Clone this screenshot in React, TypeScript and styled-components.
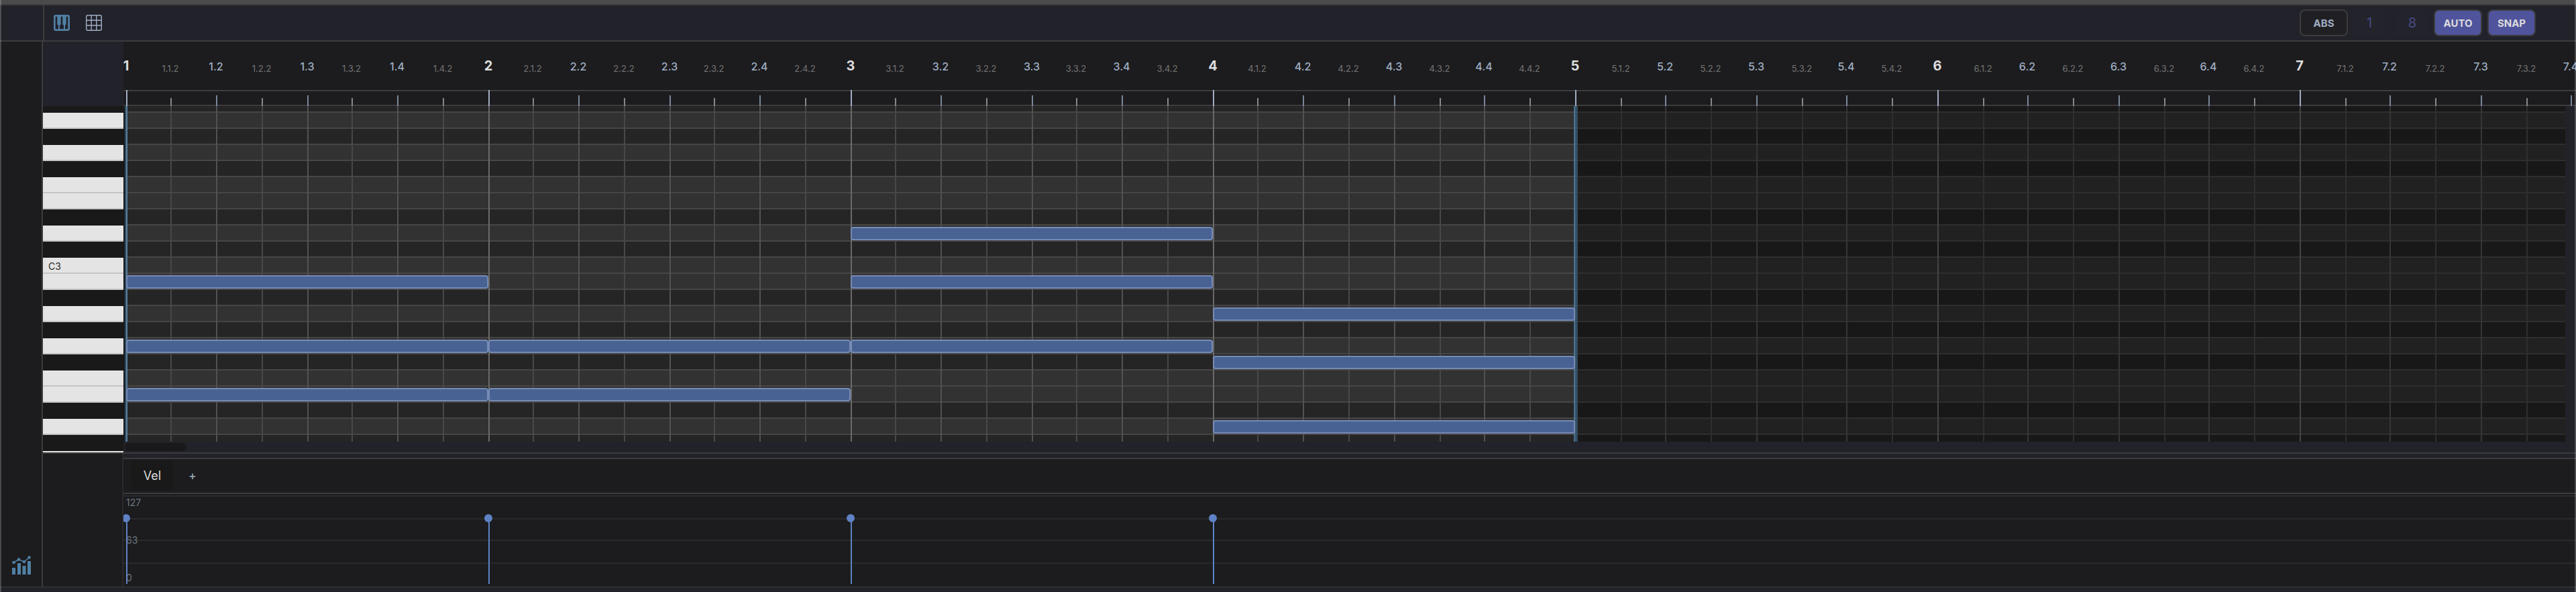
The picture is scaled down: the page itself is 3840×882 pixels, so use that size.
import React from 'react';
import styled, { createGlobalStyle, css } from 'styled-components';
import { MdPiano } from 'react-icons/md';

const BAR_WIDTH = 540.1;
const STEPS_PER_BAR = 8;
const STEP_COUNT = 55;
const LOOP_BARS = 4;
const KEY_HEIGHT = 24;

const color = {
  panel: '#22222b',
  dark: '#1c1c1e',
  line: '#3c3c3d',
  faint: '#2a2a2c',
  blue: '#5080a4',
  note: '#486293',
  noteEdge: '#768bb5',
  accent: '#50549c',
  steel: '#a0aec4',
  text: '#dcdcdc',
};

/* Grid lines land on even pixels so that they stay crisp. */
const stepX = (step: number) =>
  2 * Math.floor(((step * BAR_WIDTH) / STEPS_PER_BAR + 0.15) / 2);

type Level = 'bar' | 'beat' | 'sub';

const steps = Array.from({ length: STEP_COUNT }, (_, i) => {
  const bar = Math.floor(i / STEPS_PER_BAR) + 1;
  const beat = Math.floor((i % STEPS_PER_BAR) / 2) + 1;
  const level: Level = i % STEPS_PER_BAR === 0 ? 'bar' : i % 2 === 0 ? 'beat' : 'sub';
  const label = level === 'bar' ? `${bar}` : level === 'beat' ? `${bar}.${beat}` : `${bar}.${beat}.2`;
  return { label, level, width: stepX(i + 1) - stepX(i) };
});

const pitches = [
  'A#3', 'A3', 'G#3', 'G3', 'F#3', 'F3', 'E3', 'D#3', 'D3', 'C#3', 'C3', 'B2',
  'A#2', 'A2', 'G#2', 'G2', 'F#2', 'F2', 'E2', 'D#2', 'D2', 'C#2', 'C2',
];

const notes = [
  { pitch: 'B2', bar: 0 },
  { pitch: 'G2', bar: 0 },
  { pitch: 'E2', bar: 0 },
  { pitch: 'G2', bar: 1 },
  { pitch: 'E2', bar: 1 },
  { pitch: 'D3', bar: 2 },
  { pitch: 'B2', bar: 2 },
  { pitch: 'G2', bar: 2 },
  { pitch: 'A2', bar: 3 },
  { pitch: 'F#2', bar: 3 },
  { pitch: 'D2', bar: 3 },
];

const GlobalStyle = createGlobalStyle`
  * { box-sizing: border-box; }
  body {
    margin: 0;
    background: ${color.panel};
    color: ${color.text};
    font-family: Inter, "Liberation Sans", sans-serif;
  }
  button, input { font-family: inherit; margin: 0; padding: 0; }
`;

const Editor = styled.div`
  position: relative;
  display: flex;
  flex-direction: column;
  height: 100vh;
  min-height: 560px;
  overflow: hidden;
  &::after {
    content: '';
    position: absolute;
    inset: 0;
    border: solid rgba(255, 255, 255, 0.2);
    border-width: 0 2px;
    pointer-events: none;
  }
`;

const ResizeBar = styled.div`
  flex: none;
  height: 8px;
  background: #4b4b4b;
  border-bottom: 2px solid #3f3f3f;
`;

const Header = styled.header`
  flex: none;
  display: flex;
  height: 54px;
  background: ${color.panel};
  border-bottom: 2px solid ${color.line};
`;

const HeaderCorner = styled.div`
  width: 66px;
  border-right: 2px solid ${color.line};
`;

const Toolbar = styled.div`
  flex: 1;
  display: flex;
  align-items: center;
  padding: 0 60px 0 14px;
`;

const ViewSwitch = styled.div`
  display: flex;
  flex: 1;
  gap: 24px;
`;

const IconButton = styled.button<{ $active?: boolean }>`
  display: flex;
  align-items: center;
  justify-content: center;
  width: 24px;
  height: 24px;
  border: 0;
  background: none;
  color: ${(p) => (p.$active ? color.blue : color.steel)};
  svg { flex: none; display: block; }
`;

const ToggleButton = styled.button<{ $on?: boolean }>`
  width: 72px;
  height: 40px;
  border: 2px solid ${color.line};
  border-radius: 8px;
  background: ${(p) => (p.$on ? color.accent : '#202024')};
  color: ${(p) => (p.$on ? color.text : color.steel)};
  font-size: 15px;
  font-weight: 700;
`;

const ToggleRow = styled.div`
  display: flex;
  gap: 8px;
`;

const Fraction = styled.div`
  display: flex;
  gap: 16px;
`;

const NumberField = styled.input`
  width: 48px;
  height: 40px;
  border: 0;
  border-radius: 4px;
  background: #23232c;
  color: #484b85;
  font-size: 20px;
  text-align: center;
`;

const Body = styled.div`
  flex: 1;
  display: flex;
  min-height: 0;
`;

const Sidebar = styled.aside`
  flex: none;
  display: flex;
  flex-direction: column;
  justify-content: flex-end;
  align-items: center;
  width: 64px;
  padding: 0 0 18px 2px;
  background: ${color.dark};
  border-right: 2px solid ${color.line};
`;

const LaneButton = styled(IconButton)`
  width: 28px;
  height: 28px;
`;

const Main = styled.main`
  flex: 1;
  display: flex;
  flex-direction: column;
  min-width: 0;
`;

const Roll = styled.section`
  flex: 1;
  display: flex;
  min-height: 0;
  border-bottom: 2px solid ${color.line};
`;

const KeyColumn = styled.div`
  flex: none;
  display: flex;
  flex-direction: column;
  width: 120px;
`;

const KeyCorner = styled.div`
  flex: none;
  height: 96px;
  background: ${color.panel};
`;

/* The pitch range is scrolled so that its top key is partly hidden. */
const PitchScroller = styled.div`
  flex: 1;
  min-height: 0;
  overflow: hidden;
  & > :first-child { margin-top: -14px; }
`;

const Key = styled.div<{ $black: boolean }>`
  height: ${KEY_HEIGHT}px;
  padding-left: 8px;
  font-size: 14px;
  line-height: 26px;
  color: #2a2a2a;
  ${(p) =>
    p.$black
      ? css`background: #191919;`
      : css`
          background: #e4e4e4;
          border-bottom: 2px solid #c4c4c4;
        `}
`;

const Timeline = styled.div`
  flex: 1;
  display: flex;
  flex-direction: column;
  min-width: 0;
`;

const Ruler = styled.div`
  flex: none;
  display: flex;
  height: 96px;
  padding-left: 4px;
  overflow: hidden;
  background:
    linear-gradient(${color.line}, ${color.line}) 0 72px / 100% 2px no-repeat,
    linear-gradient(${color.line}, ${color.line}) 0 94px / 100% 2px no-repeat,
    ${color.dark};
`;

const RulerStep = styled.div`
  flex: none;
  display: flex;
  flex-direction: column;
  justify-content: space-between;
`;

const labelStyle = {
  bar: css`font-size: 20px; line-height: 72px; font-weight: 700; color: ${color.text};`,
  beat: css`font-size: 16px; line-height: 74px; font-weight: 500; color: ${color.steel};`,
  sub: css`font-size: 13px; line-height: 80px; color: #757575;`,
};

const RulerLabel = styled.span<{ $level: Level }>`
  display: flex;
  justify-content: center;
  width: 0;
  height: 48px;
  white-space: nowrap;
  ${(p) => labelStyle[p.$level]}
`;

const tickHeight = { bar: 24, beat: 16, sub: 12 };
const tickColor = { bar: color.steel, beat: '#78879a', sub: '#888888' };

const Tick = styled.i<{ $level: Level }>`
  width: 2px;
  height: ${(p) => tickHeight[p.$level]}px;
  background: ${(p) => tickColor[p.$level]};
`;

const RollBody = styled.div`
  flex: 1;
  display: flex;
  min-height: 0;
`;

const Grid = styled.div`
  position: relative;
  flex: 1;
  min-width: 0;
  padding-left: 4px;
  overflow: hidden;
  background: #252528;
`;

const PitchRows = styled(PitchScroller)`
  height: 100%;
`;

const PitchRow = styled.div<{ $black: boolean }>`
  height: ${KEY_HEIGHT}px;
  background: ${(p) => (p.$black ? '#252525' : '#323232')};
  border-bottom: 2px solid #464646;
`;

const Columns = styled.div`
  position: absolute;
  inset: 0 0 0 4px;
  display: flex;
  overflow: hidden;
`;

const lineColor = { bar: '#6a6a6a', beat: '#525252', sub: '#484848' };

const Column = styled.div<{ $level: Level }>`
  flex: none;
  border-left: 2px solid ${(p) => lineColor[p.$level]};
`;

const LoopRange = styled.div`
  position: absolute;
  top: 0;
  bottom: 0;
  left: 2px;
  border: solid rgba(84, 136, 176, 0.75);
  border-width: 0 6px 0 4px;
`;

/* Shades what lies before and after the looped bars. */
const OutOfLoop = styled.div`
  position: absolute;
  top: 0;
  bottom: 0;
  background: rgba(0, 0, 0, 0.34);
`;

const Note = styled.div`
  position: absolute;
  height: 20px;
  background: ${color.note};
  border: 2px solid ${color.noteEdge};
  border-radius: 4px;
`;

const VerticalTrack = styled.div`
  flex: none;
  width: 16px;
  background: ${color.panel};
`;

const HorizontalTrack = styled.div`
  flex: none;
  height: 16px;
  padding: 2px;
  background: ${color.panel};
`;

const Thumb = styled.div`
  width: 92px;
  height: 12px;
  border-radius: 6px;
  background: #191919;
`;

const Lanes = styled.section`
  flex: none;
  display: flex;
  height: 198px;
`;

const LaneGutter = styled.div`
  flex: none;
  width: 120px;
  background: ${color.dark};
  border-right: 2px solid ${color.faint};
`;

const LanePanel = styled.div`
  flex: 1;
  display: flex;
  flex-direction: column;
  min-width: 0;
  padding-top: 6px;
`;

const LaneTabs = styled.div`
  flex: none;
  display: flex;
  align-items: center;
  height: 54px;
  padding: 0 12px 2px;
  background: ${color.dark};
  border: solid ${color.line};
  border-width: 2px 0;
`;

const LaneTab = styled.button`
  width: 62px;
  height: 44px;
  border: 0;
  border-radius: 6px;
  background: #191919;
  color: ${color.text};
  font-size: 18px;
`;

const AddLane = styled(LaneTab)`
  width: 58px;
  background: none;
  color: ${color.steel};
`;

const VelocityLane = styled.div`
  position: relative;
  flex: 1;
  overflow: hidden;
  background:
    linear-gradient(${color.faint}, ${color.faint}) 0 2px / 100% 2px no-repeat,
    linear-gradient(${color.faint}, ${color.faint}) 0 36px / 100% 2px no-repeat,
    linear-gradient(${color.faint}, ${color.faint}) 0 68px / 100% 2px no-repeat,
    linear-gradient(${color.faint}, ${color.faint}) 0 102px / 100% 2px no-repeat,
    ${color.dark};
`;

const Scale = styled.div`
  display: flex;
  flex-direction: column;
  justify-content: space-between;
  height: 100%;
  padding: 5px 4px;
  color: #6b7480;
  font-size: 14px;
  line-height: 16px;
`;

const Stem = styled.div`
  position: absolute;
  top: 36px;
  bottom: 4px;
  width: 2px;
  background: #5f82c5;
  &::before {
    content: '';
    position: absolute;
    left: -6px;
    top: -6px;
    width: 12px;
    height: 12px;
    border-radius: 50%;
    background: inherit;
  }
`;

const Footer = styled.footer`
  flex: none;
  height: 8px;
  background: ${color.panel};
  border-top: 1px solid ${color.line};
`;

const GridIcon = () => (
  <svg width="24" height="24" viewBox="0 0 24 24" fill="none" stroke="currentColor" strokeWidth="1.4">
    <rect x="0.7" y="0.7" width="22.6" height="22.6" rx="2.2" />
    <path d="M8.2 1v22M15.8 1v22M1 8.2h22M1 15.8h22" />
  </svg>
);

const ChartIcon = () => (
  <svg width="28" height="28" viewBox="0 0 28 28" fill="currentColor">
    <path d="M0 18h5v10H0zM8 11h5v17H8zM15.500 15h5v13h-5zM23 8h5v20h-5z" />
    <circle cx="2.500" cy="10" r="2.300" />
    <circle cx="10" cy="5.500" r="2.300" />
    <circle cx="18" cy="9" r="2.300" />
    <circle cx="25.500" cy="2.500" r="2.300" />
    <path d="M2.500 10L10 5.500L18 9L25.500 2.500" fill="none" stroke="currentColor" strokeWidth="1.500" />
  </svg>
);

const isBlack = (pitch: string) => pitch.includes('#');
const barX = (bar: number) => stepX(bar * STEPS_PER_BAR);
const noteTop = (pitch: string) => pitches.indexOf(pitch) * KEY_HEIGHT - 12;

export default function App() {
  return (
    <>
      <GlobalStyle />
      <Editor>
        <ResizeBar />
        <Header>
          <HeaderCorner />
          <Toolbar>
            <ViewSwitch>
              <IconButton $active aria-label="Piano roll"><MdPiano size={32} /></IconButton>
              <IconButton aria-label="Step grid"><GridIcon /></IconButton>
            </ViewSwitch>
            <ToggleRow>
              <ToggleButton>ABS</ToggleButton>
              <Fraction>
                <NumberField aria-label="Grid numerator" defaultValue="1" />
                <NumberField aria-label="Grid denominator" defaultValue="8" />
              </Fraction>
              <ToggleButton $on>AUTO</ToggleButton>
              <ToggleButton $on>SNAP</ToggleButton>
            </ToggleRow>
          </Toolbar>
        </Header>
        <Body>
          <Sidebar>
            <LaneButton $active aria-label="Toggle lanes"><ChartIcon /></LaneButton>
          </Sidebar>
          <Main>
            <Roll>
              <KeyColumn>
                <KeyCorner />
                <PitchScroller>
                  {pitches.map((pitch) => (
                    <Key key={pitch} $black={isBlack(pitch)}>{pitch === 'C3' ? pitch : null}</Key>
                  ))}
                </PitchScroller>
              </KeyColumn>
              <Timeline>
                <Ruler>
                  {steps.map((s) => (
                    <RulerStep key={s.label} style={{ width: s.width }}>
                      <RulerLabel $level={s.level}>{s.label}</RulerLabel>
                      <Tick $level={s.level} />
                    </RulerStep>
                  ))}
                </Ruler>
                <RollBody>
                  <Grid>
                    <PitchRows>
                      {pitches.map((pitch) => (
                        <PitchRow key={pitch} $black={isBlack(pitch)} />
                      ))}
                    </PitchRows>
                    <Columns>
                      {steps.map((s) => (
                        <Column key={s.label} $level={s.level} style={{ width: s.width }} />
                      ))}
                    </Columns>
                    <LoopRange style={{ width: barX(LOOP_BARS) + 6 }} />
                    <OutOfLoop style={{ left: 0, width: 4 }} />
                    <OutOfLoop style={{ left: barX(LOOP_BARS) + 4, right: 0 }} />
                    {notes.map((n) => (
                      <Note
                        key={`${n.pitch}-${n.bar}`}
                        style={{
                          left: barX(n.bar) + 4,
                          top: noteTop(n.pitch),
                          width: barX(n.bar + 1) - barX(n.bar),
                        }}
                      />
                    ))}
                  </Grid>
                  <VerticalTrack />
                </RollBody>
                <HorizontalTrack><Thumb /></HorizontalTrack>
              </Timeline>
            </Roll>
            <Lanes>
              <LaneGutter />
              <LanePanel>
                <LaneTabs>
                  <LaneTab>Vel</LaneTab>
                  <AddLane aria-label="Add lane">+</AddLane>
                </LaneTabs>
                <VelocityLane>
                  <Scale>
                    <span>127</span>
                    <span>63</span>
                    <span>0</span>
                  </Scale>
                  {[0, 1, 2, 3].map((bar) => (
                    <Stem key={bar} style={{ left: barX(bar) + 4 }} />
                  ))}
                </VelocityLane>
              </LanePanel>
            </Lanes>
          </Main>
        </Body>
        <Footer />
      </Editor>
    </>
  );
}
